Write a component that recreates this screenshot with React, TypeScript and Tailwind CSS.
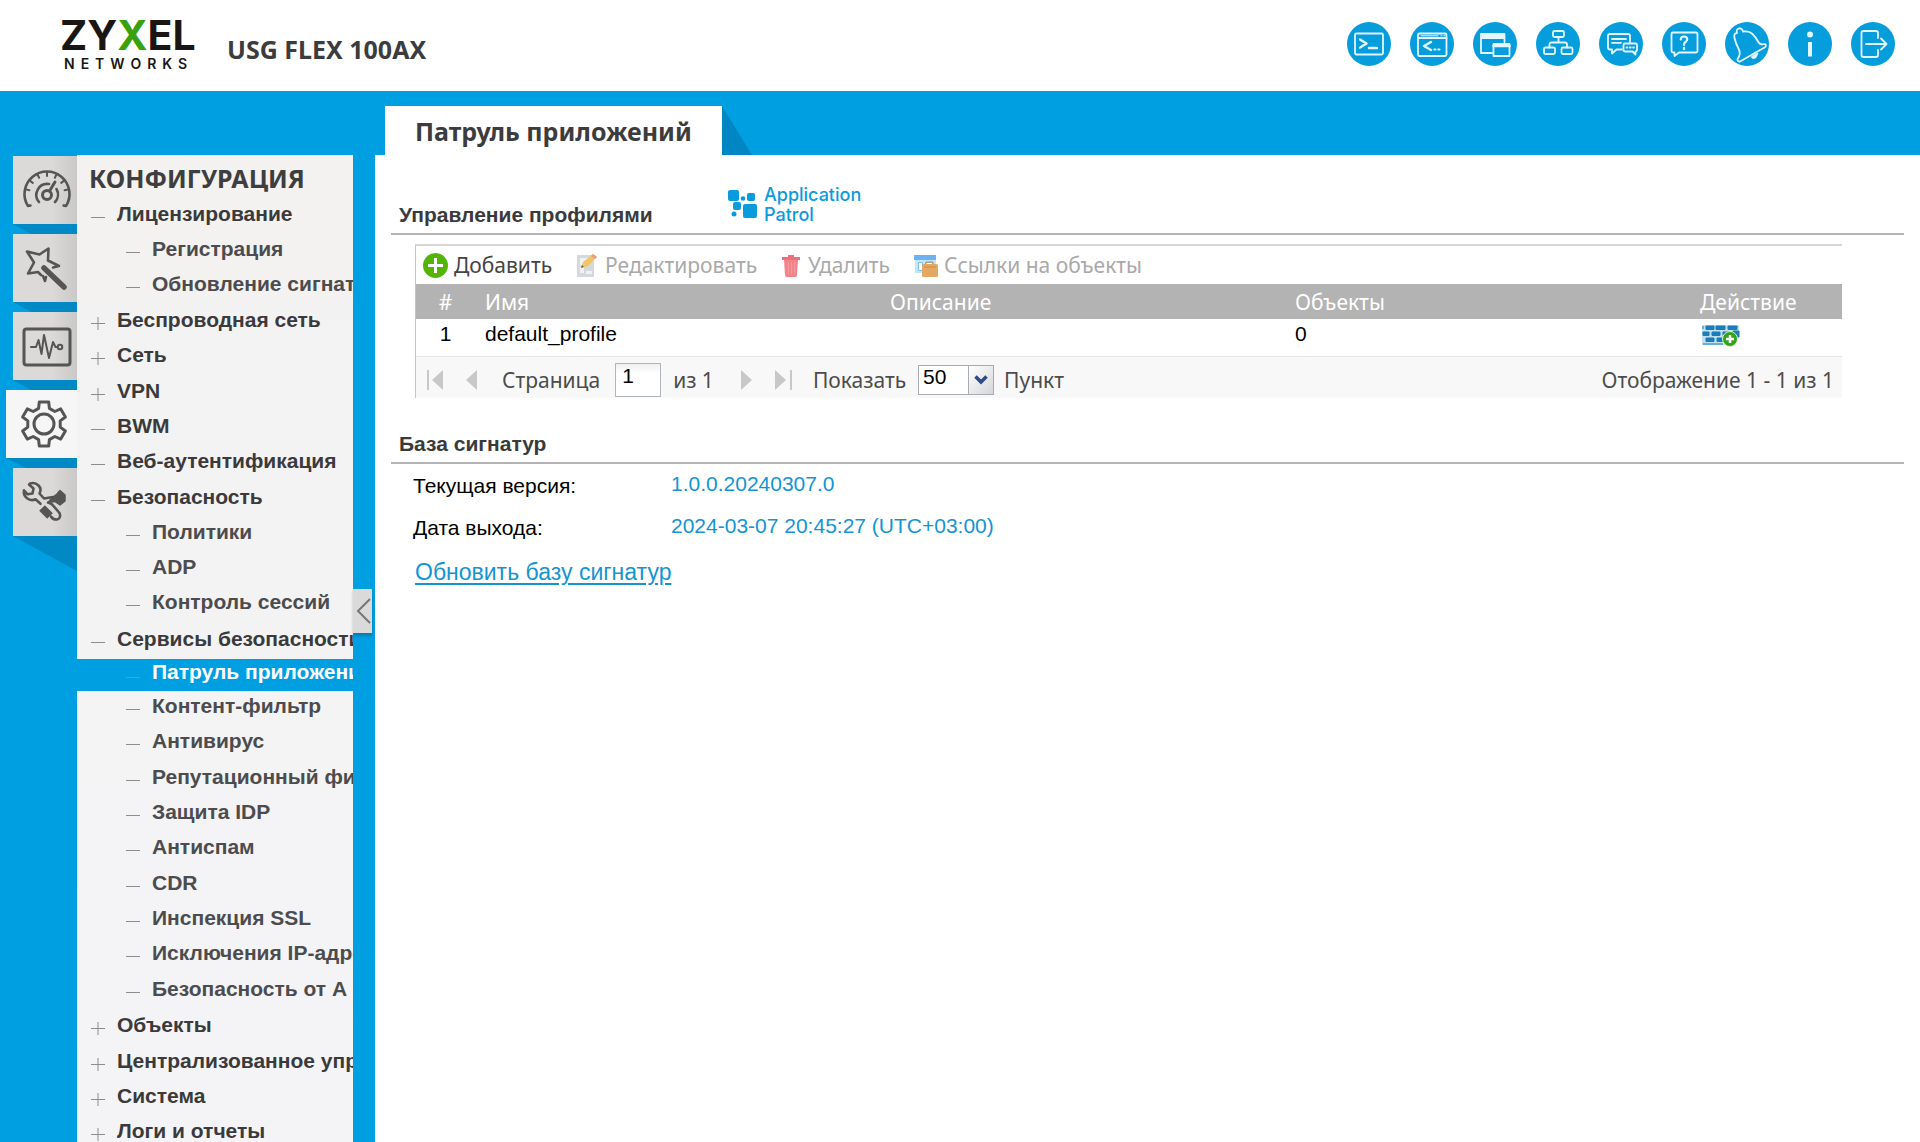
import React from "react";

interface NavNode {
  label: string;
  mark: "+" | "-";
  children?: string[];
}

const ACTIVE = "Патруль приложений";

const NAV: NavNode[] = [
  { label: "Лицензирование", mark: "-", children: ["Регистрация", "Обновление сигнатур"] },
  { label: "Беспроводная сеть", mark: "+" },
  { label: "Сеть", mark: "+" },
  { label: "VPN", mark: "+" },
  { label: "BWM", mark: "-" },
  { label: "Веб-аутентификация", mark: "-" },
  { label: "Безопасность", mark: "-", children: ["Политики", "ADP", "Контроль сессий"] },
  {
    label: "Сервисы безопасности",
    mark: "-",
    children: [
      ACTIVE,
      "Контент-фильтр",
      "Антивирус",
      "Репутационный фильтр",
      "Защита IDP",
      "Антиспам",
      "CDR",
      "Инспекция SSL",
      "Исключения IP-адресов",
      "Безопасность от A",
    ],
  },
  { label: "Объекты", mark: "+" },
  { label: "Централизованное управление", mark: "+" },
  { label: "Система", mark: "+" },
  { label: "Логи и отчеты", mark: "+" },
];

/* ---------- header icons, 44x44 canvas ---------- */

const HEADER_ICONS: { title: string; art: React.ReactNode }[] = [
  {
    title: "Консоль",
    art: (
      <>
        <rect x="8" y="11.5" width="28" height="21" rx="1.5" />
        <path d="M13 17.5l6.5 4-6.5 4M22 26h8" strokeWidth="2.4" />
      </>
    ),
  },
  {
    title: "CLI",
    art: (
      <>
        <rect x="8" y="11.5" width="28.5" height="22.5" rx="1.5" />
        <path d="M8 16h28.5" />
        <path d="M21 20l-7 4 7 4" strokeWidth="2.4" />
        <path d="M11 13.8h17M31 13.8h1M34 13.8h1" strokeWidth="1" />
        <path d="M24.2 27.5h1.4M28.2 27.5h1.4" />
      </>
    ),
  },
  {
    title: "Окна",
    art: (
      <>
        <path d="M19 31H8V12h23.5v8M8 16h23.5" />
        <path d="M10 14h20" strokeWidth="2.6" />
        <path d="M20.5 22h16v12h-16z" />
        <path d="M20.5 24h16" strokeWidth="2.6" />
      </>
    ),
  },
  {
    title: "Карта сайта",
    art: (
      <>
        <rect x="17" y="9" width="11" height="6" rx="1.5" />
        <path d="M22.5 15v5.5M13.5 25.5v-3q0-2 2-2h13.500q2 0 2 2v3" />
        <rect x="8" y="25.5" width="11" height="6.5" rx="1.5" />
        <rect x="25.5" y="25.5" width="11" height="6.5" rx="1.5" />
      </>
    ),
  },
  {
    title: "Форум",
    art: (
      <>
        <path d="M23 27.5h-5.5l-4.5 4v-4h-2q-2 0-2-2V14q0-2 2-2h18q2 0 2 2v6" />
        <path d="M13 17h14M13 20.8h9" />
        <path d="M26 21.5h10.5q1.5 0 1.5 1.5v5q0 1.5-1.5 1.5v3l-3-3H26q-1.5 0-1.5-1.5v-5q0-1.5 1.5-1.5z" />
        <path d="M27.5 25.5h1M30.8 25.5h1M34 25.5h1" />
      </>
    ),
  },
  {
    title: "Справка",
    art: (
      <>
        <path d="M11 10.500h23q1.500 0 1.500 1.500v17q0 1.500-1.500 1.500H17l-4.500 3.500v-3.500H11q-1.500 0-1.500-1.500V12q0-1.500 1.500-1.500z" />
        <path d="M18.8 17.500q0-3 3.200-3t3.200 2.800q0 1.700-1.700 2.700t-1.500 3" strokeWidth="2.2" />
        <path d="M22 26v1" strokeWidth="2.4" />
      </>
    ),
  },
  {
    title: "Уведомления",
    art: (
      <>
        <path d="M12 11q-1-4 2-4.500t4 3q6-1 9.500 2.500t5.500 7.500 7 2.500q2 2-.5 3.500L15 39.500q-2.500.5-2.500-2.500 4-5 1-10.500T9.500 16t2.500-5z" />
        <path d="M27 35q3 3 5.500-3.500z" fill="#e4f6ff" />
      </>
    ),
  },
  {
    title: "О системе",
    art: (
      <>
        <circle cx="22" cy="12.5" r="3" fill="#e4f6ff" stroke="none" />
        <path d="M22 20v14.5" strokeWidth="4" strokeLinecap="butt" />
      </>
    ),
  },
  {
    title: "Выход",
    art: (
      <>
        <path d="M27 16v-5q0-2-2-2H12.500q-2 0-2 2v22q0 2 2 2H25q2 0 2-2v-5" />
        <path d="M15 22h20.500M30 16.500l5.500 5.500-5.500 5.500" />
      </>
    ),
  },
];

/* ---------- side tabs, 64x68 canvas ---------- */

const polar = (cx: number, cy: number, r: number, deg: number) => {
  const a = (deg * Math.PI) / 180;
  return `${(cx + r * Math.sin(a)).toFixed(1)} ${(cy - r * Math.cos(a)).toFixed(1)}`;
};

const gearPath =
  "M" +
  [0, 60, 120, 180, 240, 300]
    .flatMap((a) => [
      polar(38, 34, 16.5, a - 19),
      polar(38, 34, 22.5, a - 12),
      polar(38, 34, 22.5, a + 12),
      polar(38, 34, 16.5, a + 19),
    ])
    .join("L") +
  "Z";

const gaugeTicks = [-78, -52, -26, 0, 26, 52, 78]
  .map((a) => `M${polar(34, 38, 22, a)}L${polar(34, 38, 18, a)}`)
  .join("");

const SIDE_TABS: { title: string; active?: boolean; art: React.ReactNode }[] = [
  {
    title: "Панель",
    art: (
      <>
        <path
          d={`M17.5 49.5L${polar(34, 38, 22.5, -122)}A22.500 22.500 0 1 1 ${polar(34, 38, 22.5, 122)}L50.500 49.500`}
          strokeWidth="2.6"
        />
        <path d={gaugeTicks} strokeWidth="2" />
        <path d="M26 46a11 11 0 0 1 10-18M43.500 33a11 11 0 0 1-1.500 13" strokeWidth="2.600" />
        <circle cx="34" cy="39" r="4.5" />
        <path d="M36.5 35L42 26" />
      </>
    ),
  },
  {
    title: "Быстрая настройка",
    art: (
      <>
        <path d="M28 41l-3-3-10 1.500 6-11-7-11 12.500 3 9-6-.5 12 11 5.500-6 1.500M30 42l2 5 1-4" strokeWidth="2.6" />
        <path d="M31 34l20 19" strokeWidth="5.5" />
      </>
    ),
  },
  {
    title: "Мониторинг",
    art: (
      <>
        <rect x="11" y="17" width="46" height="36" rx="2.5" />
        <path d="M18 35h5l2.500-7 3 14L31 23l5 23 4-16 2.500 5h2" strokeWidth="2" />
        <circle cx="47" cy="35" r="2.3" strokeWidth="2" />
      </>
    ),
  },
  {
    title: "Конфигурация",
    active: true,
    art: (
      <>
        <path d={gearPath} />
        <circle cx="38" cy="34" r="10" />
      </>
    ),
  },
  {
    title: "Обслуживание",
    art: (
      <>
        <path d="M16 16.500l4.500 4-1 5-5 .8-3.500-4q-1 5 3 8t8.500 1l5 4.500M17 15.500q5-1.500 8.500 2t1 8l4.500 5 9-1.500" strokeWidth="2.6" />
        <path d="M39 30l5-4 3-3.500 5 4.500v6l-5 4-5-3.500-7 1z" fill="#555" strokeWidth="1.5" />
        <path d="M29 40l8 8" strokeWidth="8" strokeLinecap="butt" />
        <path d="M35 34.500q4 1 5.500 3.500l6 7q2 5-2.500 6.500-4 .5-6-3" strokeWidth="2.6" />
      </>
    ),
  },
];

/* ---------- small pieces ---------- */

function TreeMark({ mark }: { mark: "+" | "-" }) {
  return (
    <svg width="14" height="16" viewBox="0 0 14 16" className="mt-2.5 shrink-0" stroke="#8d8d8d" strokeWidth="1">
      <path d={mark === "+" ? "M0 8.500h14M7 2v13" : "M0 8.500h14"} />
    </svg>
  );
}

function SectionTitle({ children }: { children: React.ReactNode }) {
  return <h2 className="text-[21px] leading-6 font-bold text-[#3a3a3c]">{children}</h2>;
}

function ToolButton({
  icon,
  label,
  disabled,
}: {
  icon: React.ReactNode;
  label: string;
  disabled?: boolean;
}) {
  return (
    <button type="button" disabled={disabled} className="flex items-center gap-1.5 text-[#444] disabled:text-[#a9a9a9]">
      {icon}
      {label}
    </button>
  );
}

function PagerButton({ title, d, bar }: { title: string; d: string; bar?: string }) {
  return (
    <button type="button" disabled aria-label={title}>
      <svg width="18" height="22" viewBox="0 0 18 22">
        <path d={d} fill="#c8c8c8" />
        {bar && <path d={bar} stroke="#c8c8c8" strokeWidth="2" />}
      </svg>
    </button>
  );
}

function Header() {
  return (
    <header className="flex h-[91px] shrink-0 items-start justify-between bg-white pr-[25px] pl-[60px]">
      <div className="flex">
        <div className="w-[134px] pt-4 font-['Inter'] text-[#1a1614]">
          <div className="text-[41px] leading-[38px] font-bold">
            ZY<span className="text-[#3aa10e]">X</span>EL
          </div>
          <div className="pl-1 text-sm leading-5 font-semibold tracking-[6px]">NETWORKS</div>
        </div>
        <h1 className="pt-[31px] pl-[33px] font-['Noto_Sans'] text-[25px] leading-9 font-bold text-[#3c3c3e]">
          USG FLEX 100AX
        </h1>
      </div>
      <div className="flex gap-[19px] pt-[22px]">
        {HEADER_ICONS.map((icon) => (
          <button key={icon.title} type="button" aria-label={icon.title} className="size-11 rounded-full bg-[#069ddd]">
            <svg
              viewBox="0 0 44 44"
              fill="none"
              stroke="#e4f6ff"
              strokeWidth="1.8"
              strokeLinecap="round"
              strokeLinejoin="round"
            >
              {icon.art}
            </svg>
          </button>
        ))}
      </div>
    </header>
  );
}

function SideTabs() {
  return (
    <div className="flex w-[77px] shrink-0 flex-col items-end gap-2.5 pt-[65px]">
      {SIDE_TABS.map((tab) => (
        <div key={tab.title} className="relative">
          <button
            type="button"
            aria-label={tab.title}
            className={
              tab.active
                ? "block h-[68px] w-[71px] bg-[#f6f6f6]"
                : "block h-[68px] w-16 bg-linear-to-r from-[#dcdad9] from-60% to-[#c9c9c8]"
            }
          >
            <svg
              width="64"
              height="68"
              viewBox="0 0 64 68"
              fill="none"
              stroke="#555"
              strokeWidth="3"
              strokeLinecap="round"
              strokeLinejoin="round"
            >
              {tab.art}
            </svg>
          </button>
          <svg viewBox="0 0 64 35" preserveAspectRatio="none" className="absolute top-full right-0 h-[35px] w-full">
            <path d="M0 0H64V35z" fill="#0089c4" />
          </svg>
        </div>
      ))}
    </div>
  );
}

function SideNav() {
  return (
    <div className="relative mt-16 w-[276px] shrink-0">
      <nav className="h-full overflow-hidden bg-linear-to-b from-[#f3f2f1] to-[#f4f4f7] pt-1.5 whitespace-nowrap">
        <h2 className="pb-1 pl-3 font-['Noto_Sans'] text-[25px] leading-[34px] font-bold text-[#3e3e40]">
          КОНФИГУРАЦИЯ
        </h2>
        <ul className="text-[21px] font-bold">
          {NAV.map((node) => (
            <li key={node.label} className="nth-[3n]:mb-px">
              <a href="#" className="flex gap-3 pl-[14px] h-[35px] leading-[30px] text-[#3a3a3c]">
                <TreeMark mark={node.mark} />
                {node.label}
              </a>
              {node.children && (
                <ul className="pb-px">
                  {node.children.map((child) => (
                    <li key={child} className="nth-[3n]:mb-px">
                      <a
                        href="#"
                        className={
                          child === ACTIVE
                            ? "flex h-8 gap-3 bg-[#009fe1] pl-[49px] leading-[26px] text-white"
                            : "flex h-[35px] gap-3 pl-[49px] leading-[30px] text-[#4c4c4e]"
                        }
                      >
                        <TreeMark mark="-" />
                        {child}
                      </a>
                    </li>
                  ))}
                </ul>
              )}
            </li>
          ))}
        </ul>
      </nav>
      <button
        type="button"
        aria-label="Свернуть меню"
        className="absolute top-[434px] left-full h-11 w-[19px] bg-[#dadada] shadow-[0_3px_3px_rgba(0,0,0,0.2)]"
      >
        <svg viewBox="0 0 19 44" fill="none" stroke="#777" strokeWidth="2">
          <path d="M17 10L5 22l12 12" />
        </svg>
      </button>
    </div>
  );
}

function ProfileGrid() {
  const [page, setPage] = React.useState("1");
  const [size, setSize] = React.useState("50");

  return (
    <div className="mt-[9px] mr-[62px] ml-6 border-t-2 border-l border-t-[#d6d6d6] border-l-[#c4c6c9] font-['Noto_Sans'] text-[21px] leading-[30px] text-[#4c4c4c]">
      <div className="flex h-[38px] items-center gap-6 pl-[7px]">
        <ToolButton
          label="Добавить"
          icon={
            <svg width="25" height="25" viewBox="0 0 25 25">
              <circle cx="12.5" cy="12.5" r="12.5" fill="#55b507" />
              <path d="M12.5 5v15M5 12.5h15" stroke="#fff" strokeWidth="3" />
            </svg>
          }
        />
        <ToolButton
          disabled
          label="Редактировать"
          icon={
            <svg width="23" height="25" viewBox="0 0 23 25">
              <path d="M1 2h17v22H1z" fill="#d3d9dc" />
              <path d="M4 5h8v7H4zM4 14h4v6H4zM10 18h6v3h-6z" fill="#f1f3f3" />
              <path d="M5 15l2-6L17 1l4 3-9 9z" fill="#f3c463" />
              <path d="M17 1l4 3-2 2-4-3z" fill="#ec9a8d" />
              <path d="M5 15l1-3 2 2z" fill="#6d6350" />
            </svg>
          }
        />
        <ToolButton
          disabled
          label="Удалить"
          icon={
            <svg width="21" height="25" viewBox="0 0 21 25">
              <path d="M3 7h14l-1 15q0 2-2 2H6q-2 0-2-2z" fill="#f58289" />
              <path d="M1 4h18v3H1zM7 2h6v3H7z" fill="#ee6f77" />
              <path d="M7.5 9v12M10.5 9v12M13.5 9v12" stroke="#ee9ba1" />
            </svg>
          }
        />
        <ToolButton
          disabled
          label="Ссылки на объекты"
          icon={
            <svg width="24" height="25" viewBox="0 0 24 25">
              <path d="M1 3h21v17H1z" fill="#bfe6fb" />
              <path d="M0 2h22v5H0z" fill="#6eb2ef" />
              <path d="M4.5 9.5h4v8h-4zM11.5 9.5h7v4h-7z" fill="#fff" stroke="#7cc4ee" />
              <rect x="8" y="11" width="16" height="13" rx="1.5" fill="#e5a862" />
              <path d="M12 11V9h7v2M10 14h12" stroke="#c98a45" fill="none" />
            </svg>
          }
        />
      </div>

      <table className="w-full table-fixed text-left">
        <colgroup>
          <col className="w-[59px]" />
          <col />
          <col />
          <col />
          <col className="w-[152px]" />
        </colgroup>
        <thead>
          <tr className="h-[35px] bg-[#b3b3b3] text-white">
            <th className="text-center font-normal">#</th>
            <th className="pl-2.5 font-normal">Имя</th>
            <th className="pl-2.5 font-normal">Описание</th>
            <th className="pl-2.5 font-normal">Объекты</th>
            <th className="pl-2.5 font-normal">Действие</th>
          </tr>
        </thead>
        <tbody>
          <tr className="h-[37px] bg-white align-top font-['Liberation_Sans'] text-black">
            <td className="text-center">1</td>
            <td className="pl-2.5">default_profile</td>
            <td />
            <td className="pl-2.5">0</td>
            <td className="pt-1.5 pl-3">
              <button type="button" aria-label="Добавить в политику" className="block">
                <svg width="38" height="22" viewBox="0 0 38 22">
                  <path d="M0 0h37v13l-4 7H0z" fill="#bfe0f2" />
                  <path
                    d="M1 1v3M4 1h8v3.5H4zM14 1h9v3.5h-9zM26 1h9v3.5h-9zM1 7h6v3.5H1zM10 7h8v3.5h-8zM21 7h7v3.5h-7zM31 6h6v6h-6zM4 13h8v3.5H4zM15 13h7v3.5h-7zM1 19h20"
                    fill="#1c7db8"
                    stroke="#1c7db8"
                  />
                  <circle cx="28" cy="14" r="7.5" fill="#35a31a" stroke="#d9efd2" />
                  <path d="M28 10v8M24 14h8" stroke="#fff" strokeWidth="2.5" />
                </svg>
              </button>
            </td>
          </tr>
        </tbody>
      </table>

      <div className="flex h-[42px] items-center border-t border-[#e6e6e6] bg-[#f8f8f9] pt-1 pr-2 pl-2.5">
        <div className="flex gap-[22px]">
          <PagerButton title="Первая" d="M17 1v20L6 11z" bar="M2 1v20" />
          <PagerButton title="Предыдущая" d="M11 1v20L0 11z" />
        </div>
        <label className="flex items-center gap-[15px] pl-[18px]">
          Страница
          <input
            value={page}
            onChange={(e) => setPage(e.target.value)}
            className="h-[34px] w-[46px] border border-[#b0b5bd] bg-white bg-linear-to-b from-[#eef0f2] to-white to-30% pb-2 pl-1.5 font-['Liberation_Sans'] leading-6 text-black outline-none"
          />
        </label>
        <span className="pl-3">из 1</span>
        <div className="flex gap-4 pl-[27px]">
          <PagerButton title="Следующая" d="M0 1v20l11-10z" />
          <PagerButton title="Последняя" d="M0 1v20l11-10z" bar="M16 1v20" />
        </div>
        <label className="flex items-center pl-5" htmlFor="page-size">
          Показать
        </label>
        <div className="relative mr-2.5 ml-3">
          <select
            id="page-size"
            value={size}
            onChange={(e) => setSize(e.target.value)}
            className="block h-[30px] w-[76px] appearance-none border border-[#a8acb2] bg-white pb-1.5 pl-1 font-['Liberation_Sans'] leading-[22px] text-black outline-none"
          >
            <option>50</option>
            <option>100</option>
          </select>
          <span className="pointer-events-none absolute inset-y-px right-px flex w-[25px] items-center justify-center border-l border-[#a8acb2] bg-linear-to-br from-white to-[#d4d6d8]">
            <svg width="14" height="10" viewBox="0 0 14 10" fill="none" stroke="#2c4a86" strokeWidth="3.5">
              <path d="M1.5 1.5L7 7l5.500-5.500" />
            </svg>
          </span>
        </div>
        <span>Пункт</span>
        <span className="ml-auto">Отображение 1 - 1 из 1</span>
      </div>
    </div>
  );
}

export default function App() {
  return (
    <div className="flex h-screen flex-col overflow-hidden font-['Liberation_Sans',sans-serif]">
      <Header />
      <div className="flex min-h-0 flex-1 bg-[#009fe1]">
        <SideTabs />
        <SideNav />

        <div className="ml-[22px] flex min-w-0 flex-1 flex-col">
          <div className="flex pt-[15px] pl-2.5">
            <div className="h-[49px] bg-white px-[30px] font-['Noto_Sans'] text-[25px] leading-[50px] font-bold text-[#3c3c3e]">
              Патруль приложений
            </div>
            <svg width="30" height="49" viewBox="0 0 30 49">
              <path d="M0 0L30 49H0z" fill="#0087c3" />
            </svg>
          </div>

          <main className="flex-1 bg-white pt-[30px] pr-4 pl-4">
            <section>
              <div className="flex h-[50px] items-start border-b-2 border-[#b4b4b4] pl-2">
                <div className="w-[329px] pt-[18px]">
                  <SectionTitle>Управление профилями</SectionTitle>
                </div>
                <div className="flex gap-1.5 font-['Inter'] text-lg leading-5 font-medium text-[#0a9bdc]">
                  <svg width="30" height="30" viewBox="0 0 30 30" fill="currentColor" className="mt-1">
                    <rect x="0" y="1" width="11" height="11" rx="2" />
                    <circle cx="15" cy="9.5" r="2.3" />
                    <rect x="19" y="4" width="8" height="8" rx="2" />
                    <rect x="5" y="13" width="8" height="8" rx="2" />
                    <rect x="15" y="15" width="14" height="14" rx="2" />
                    <circle cx="6" cy="25" r="2.5" />
                  </svg>
                  <p>
                    Application
                    <br />
                    Patrol
                  </p>
                </div>
              </div>
              <ProfileGrid />
            </section>

            <section className="mt-[34px]">
              <div className="border-b-2 border-[#b4b4b4] pb-1.5 pl-2">
                <SectionTitle>База сигнатур</SectionTitle>
              </div>
              <dl className="grid grid-cols-[258px_1fr] gap-y-4 pt-2 pl-[22px] text-[21px] leading-6">
                <dt className="pt-0.5 text-black">Текущая версия:</dt>
                <dd className="text-[#1494d2]">1.0.0.20240307.0</dd>
                <dt className="pt-0.5 text-black">Дата выхода:</dt>
                <dd className="text-[#1494d2]">2024-03-07 20:45:27 (UTC+03:00)</dd>
              </dl>
              <a
                href="#"
                className="mt-5 ml-6 inline-block text-[23px] leading-6 text-[#1494d2] underline underline-offset-3"
              >
                Обновить базу сигнатур
              </a>
            </section>
          </main>
        </div>
      </div>
    </div>
  );
}
